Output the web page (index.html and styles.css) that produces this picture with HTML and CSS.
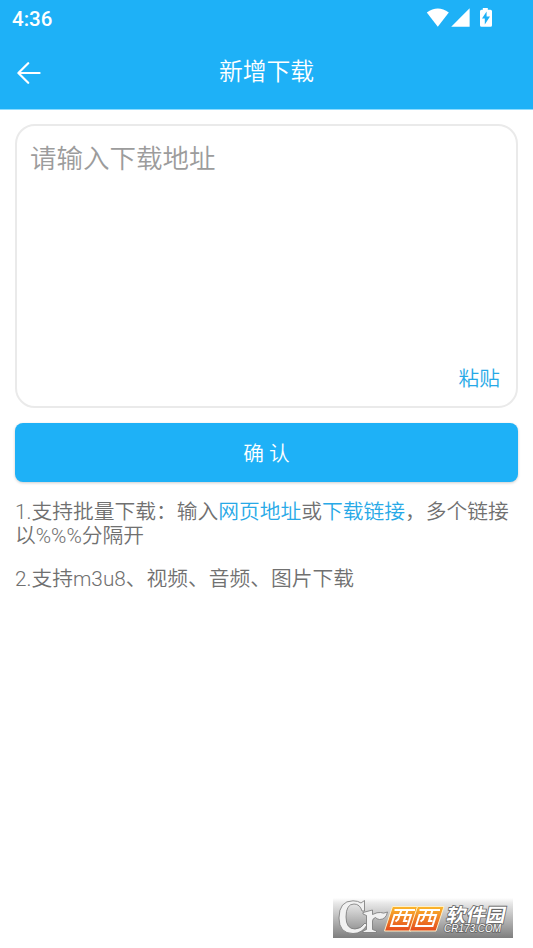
FILE: index.html
```html
<!DOCTYPE html>
<html lang="zh-CN">
<head>
<meta charset="utf-8">
<title>新增下载</title>
<link rel="stylesheet" href="styles.css">
</head>
<body>
<header class="header">
  <div class="status">
    <span class="clock">4:36</span>
    <svg class="status-icons" width="66" height="20" viewBox="0 0 66 20">
      <path d="M0.8 4.1Q11.8-4.1 22.8 4.1L11.8 18.2Z" transform="translate(0 .5)"/>
      <path d="M43.6 0.3V18.7H25.2Z"/>
      <path fill-rule="evenodd" d="M56.800 0h5v1.700h2.700q1.500 0 1.500 1.500v14q0 1.500-1.500 1.500h-9q-1.500 0-1.500-1.500v-14q0-1.500 1.500-1.500h1.300ZM60.600 3.500L56 10.500h2.800v5.900L64 8.500h-3.400Z"/>
    </svg>
  </div>
  <div class="toolbar">
    <svg class="back" width="24" height="22" viewBox="0 0 24 22"><path d="M11.2 1.2L1.4 11L11.2 20.8M1.8 11H22.6"/></svg>
    <h1 class="title">新增下载</h1>
  </div>
</header>
<main class="content">
  <section class="input-box">
    <div class="placeholder">请输入下载地址</div>
    <div class="paste">粘贴</div>
  </section>
  <button class="confirm">确 认</button>
  <p class="note">1.支持批量下载：输入<span class="link">网页地址</span>或<span class="link">下载链接</span>，多个链接<br>以%%%分隔开</p>
  <p class="note">2.支持m3u8、视频、音频、图片下载</p>
</main>
<svg class="watermark" width="180" height="40" viewBox="0 0 180 40">
  <defs>
    <linearGradient id="plate" x1="0" y1="0" x2="0" y2="1"><stop offset="0" stop-color="#fff"/><stop offset=".12" stop-color="#e9e9e9"/><stop offset="1" stop-color="#7e7e7e"/></linearGradient>
    <linearGradient id="orange" x1="0" y1="0" x2="0" y2="1"><stop offset="0" stop-color="#fbb72c"/><stop offset="1" stop-color="#e4491d"/></linearGradient>
  </defs>
  <rect width="180" height="40" fill="url(#plate)"/>
  <g class="mark">
    <path d="M31.500 2.500V13h-2.500Q27 6 21 6Q13 6 13 19Q13 31 22 31Q28 31 32 25l2 2Q29 35.500 20 35.500Q6 35.500 6 20Q6 2.800 20 2.800Q25 2.800 28 5Z"/>
    <path d="M30 14.500l9.500-2.500v4.500q5-2.500 8-2q3 1.500 7-.500q-1.500 7.500-8 7.500q-3-.500-4-2q-3 1-3 3.500v8.500l4 1.500v1.500H30V33l3.500-1.500v-14L30 16Z"/>
  </g>
  <g class="tiles">
    <path d="M59.500 8.500H86L78 33H51.500Z"/><path d="M84.500 8.500H111L103 33H76.500Z"/>
  </g>
  <g class="tile-lines">
    <path d="M61.500 12h20.500M61.500 17h16.500l-3.500 11H58ZM68.500 12l-3.500 9.500-2.500 2M74.500 12l-3.500 11h3.500"/>
    <path d="M86.500 12h20.500M86.500 17h16.500l-3.500 11H83ZM93.500 12l-3.500 9.500-2.500 2M99.500 12l-3.500 11h3.500"/>
  </g>
  <text class="wm-name" transform="translate(112.500 24) skewX(-12)" textLength="59" lengthAdjust="spacingAndGlyphs">软件园</text>
  <text class="wm-site" x="111" y="34" textLength="57" lengthAdjust="spacingAndGlyphs">CR173.COM</text>
</svg>
</body>
</html>
```
FILE: styles.css
```css
* { box-sizing: border-box; }
body {
  margin: 0;
  height: 948px;
  background: #fff;
  font-family: Roboto, "Noto Sans CJK SC", sans-serif;
  font-weight: 350;
  position: relative;
  overflow: hidden;
}
.header {
  height: 110px;
  background: #1eb1f7;
  border-bottom: 1px solid #8cdcff;
  color: #fff;
}
.status {
  height: 36px;
  padding: 0 41px 0 12px;
  display: flex;
  justify-content: space-between;
  align-items: center;
}
.clock { font-size: 20.5px; font-weight: 500; line-height: 36px; padding-top: 1px; }
.status-icons { fill: #fff; margin-top: -1px; }
.toolbar {
  height: 73px;
  padding: 0 17px;
  display: grid;
  grid-template-columns: 24px 1fr 24px;
  align-items: center;
}
.back { fill: none; stroke: #fff; stroke-width: 2.2; stroke-linecap: round; stroke-linejoin: round; }
.title { margin: 0; padding-bottom: 1px; font-size: 23.8px; font-weight: 350; text-align: center; line-height: 36px; }
.content { padding: 14px 15px 0; }
.input-box {
  height: 284px;
  border: 2px solid #eaeaea;
  border-radius: 20px;
  padding: 15px 16px 12px 13px;
  display: flex;
  flex-direction: column;
  justify-content: space-between;
}
.placeholder { color: #9c9c9c; font-size: 26.5px; line-height: 36px; }
.paste { color: #27a9e7; font-size: 20.7px; line-height: 30px; text-align: right; }
.confirm {
  display: block;
  width: 100%;
  height: 59px;
  margin: 15px 0 18px;
  padding: 0 0 2px;
  border: 0;
  border-radius: 8px;
  background: #1eb1f7;
  box-shadow: 0 1px 3px rgba(0, 0, 0, .2);
  color: #fff;
  font: inherit;
  font-size: 20.7px;
}
.note { margin: 0 0 19px; color: #707070; font-size: 20.75px; line-height: 24px; white-space: nowrap; }
.link { color: #27a9e7; }
.watermark { position: absolute; left: 333px; top: 898px; }
.mark { fill: #f1f1f1; stroke: #777; stroke-width: .8; }
.tiles { fill: url(#orange); stroke: #fff0c8; stroke-width: 1; stroke-linejoin: round; }
.tile-lines { fill: none; stroke: #fff; stroke-width: 2; }
.wm-name, .wm-site { fill: #fff; stroke: #666; paint-order: stroke; stroke-width: 1.6px; font-weight: 700; }
.wm-name { font-size: 19px; font-family: "Noto Sans CJK SC", sans-serif; }
.wm-site { font-size: 10px; font-style: italic; font-weight: 400; font-family: "Liberation Sans", sans-serif; }
```
